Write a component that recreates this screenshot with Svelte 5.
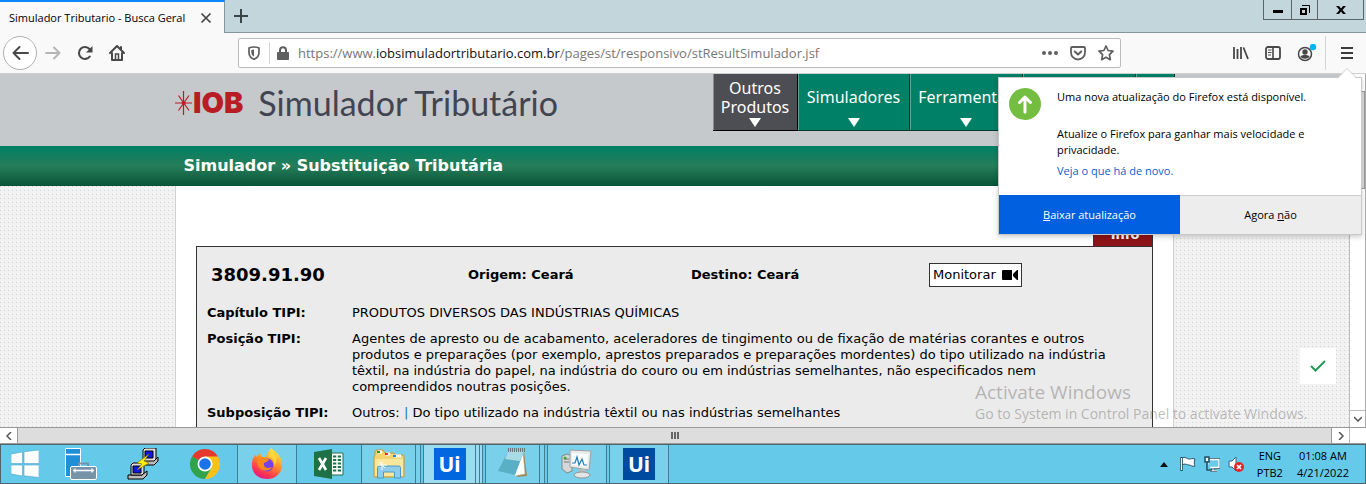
<script>
  const menus = [
    { label: 'Outros Produtos', dark: true },
    { label: 'Simuladores' },
    { label: 'Ferramentas' },
    { label: '' },
    { label: '' }
  ];
  const rows = [
    { term: 'Capítulo TIPI:', lines: ['PRODUTOS DIVERSOS DAS INDÚSTRIAS QUÍMICAS'] },
    {
      term: 'Posição TIPI:',
      lines: [
        'Agentes de apresto ou de acabamento, aceleradores de tingimento ou de fixação de matérias corantes e outros',
        'produtos e preparações (por exemplo, aprestos preparados e preparações mordentes) do tipo utilizado na indústria',
        'têxtil, na indústria do papel, na indústria do couro ou em indústrias semelhantes, não especificados nem',
        'compreendidos noutras posições.'
      ]
    },
    { term: 'Subposição TIPI:', split: ['Outros:', 'Do tipo utilizado na indústria têxtil ou nas indústrias semelhantes'] }
  ];
</script>

<div class="desktop">
  <div class="tabstrip">
    <div class="tab">
      <span>Simulador Tributario - Busca Geral</span>
      <button class="plain" aria-label="Fechar aba">
        <svg width="12" height="12" viewBox="0 0 12 12"><path d="M1.500 1.500l9 9M10.500 1.500l-9 9" stroke="#444" stroke-width="1.700" /></svg>
      </button>
    </div>
    <button class="plain newtab" aria-label="Nova aba">
      <svg width="14" height="14" viewBox="0 0 14 14"><path d="M7 0v14M0 7h14" stroke="#3b4446" stroke-width="2" /></svg>
    </button>
    <div class="wincontrols">
      <button class="min" aria-label="Minimizar"><svg width="10" height="10"><path d="M0 5h10v3H0z" fill="#000" /></svg></button>
      <button class="max" aria-label="Restaurar"><svg width="10" height="10"><path d="M1 4h5v5H1z" fill="none" stroke="#000" stroke-width="2" /><path d="M2 .5h7.500V8" fill="none" stroke="#000" /></svg></button>
      <button class="close" aria-label="Fechar"><svg width="10" height="10"><path d="M0 1h3l2 2.500L7 1h3L6.500 5 10 9H7L5 6.500 3 9H0l3.500-4z" fill="#000" /></svg></button>
    </div>
  </div>

  <div class="toolbar">
    <div class="navicons">
      <button class="plain back" aria-label="Voltar"><svg width="18" height="18" viewBox="0 0 18 18"><path d="M17 9H2.500M8.500 3l-6 6 6 6" fill="none" stroke="#484848" stroke-width="2" stroke-linecap="round" stroke-linejoin="round" /></svg></button>
      <button class="plain" aria-label="Avançar"><svg width="16" height="16" viewBox="0 0 16 16"><path d="M1 8h13.500M9 2.500 14.500 8 9 13.500" fill="none" stroke="#b5b5b5" stroke-width="2" stroke-linecap="round" stroke-linejoin="round" /></svg></button>
      <button class="plain" aria-label="Recarregar"><svg width="16" height="16" viewBox="0 0 16 16"><path d="M12.800 11.500A6 6 0 1 1 12.500 4" fill="none" stroke="#484848" stroke-width="2.100" stroke-linecap="round" /><path d="M15.500 1v6.500H9z" fill="#484848" /></svg></button>
      <button class="plain" aria-label="Página inicial"><svg width="16" height="16" viewBox="0 0 16 16"><path d="M1 8l7-7 7 7M3 8v7h10V8M12 2v3" fill="none" stroke="#484848" stroke-width="2" stroke-linecap="round" stroke-linejoin="round" /><path d="M6.500 15V9h3v6z" fill="none" stroke="#484848" stroke-width="1.500" /></svg></button>
    </div>
    <div class="urlbar">
      <svg width="14" height="14" viewBox="0 0 14 14"><path d="M7 1c2 0 4 .5 5 1v4.500c0 3.500-2 5.500-5 6.800C4 12 2 10 2 6.500V2c1-.5 3-1 5-1z" fill="none" stroke="#5f5f5f" stroke-width="1.700" /><path d="M7 3.500v7C5 9.500 4.300 8.500 4.300 6V4z" fill="#5f5f5f" /></svg>
      <span class="rule"></span>
      <svg class="lock" width="12" height="14" viewBox="0 0 12 14"><path d="M3 7V4.200a3 3 0 0 1 6 0V7" fill="none" stroke="#5f5f5f" stroke-width="2" /><rect y="6" width="12" height="8" rx="1" fill="#5f5f5f" /></svg>
      <span class="url">https://www.<b>iobsimuladortributario.com.br</b>/pages/st/responsivo/stResultSimulador.jsf</span>
      <svg width="16" height="16" viewBox="0 0 16 16"><g fill="#5f5f5f"><circle cx="2" cy="8" r="2" /><circle cx="8" cy="8" r="2" /><circle cx="14" cy="8" r="2" /></g></svg>
      <svg width="16" height="16" viewBox="0 0 16 16"><path d="M2 2h12c.6 0 1 .4 1 1v4.500a7 7 0 0 1-14 0V3c0-.6.4-1 1-1z" fill="none" stroke="#5f5f5f" stroke-width="1.800" /><path d="M4.800 6.500 8 9.500l3.200-3" fill="none" stroke="#5f5f5f" stroke-width="2" stroke-linecap="round" stroke-linejoin="round" /></svg>
      <svg width="16" height="16" viewBox="0 0 16 16"><path d="M8 1l2.100 4.500 4.900.7-3.600 3.500.9 5L8 12.300l-4.300 2.400.9-5L1 6.200l4.900-.7z" fill="none" stroke="#5f5f5f" stroke-width="1.700" stroke-linejoin="round" /></svg>
    </div>
    <div class="tools">
      <svg width="16" height="16" viewBox="0 0 16 16"><path d="M1 2v12M4.500 4v10M8 2v12M10.500 2.500l4.500 11.500" fill="none" stroke="#484848" stroke-width="1.800" /></svg>
      <svg width="16" height="16" viewBox="0 0 16 16"><rect x="1" y="2" width="14" height="12" rx="2" fill="none" stroke="#484848" stroke-width="1.800" /><path d="M8 2v12" stroke="#484848" stroke-width="1.600" /><path d="M3 5h3.500M3 7.500h3.500M3 10h3" stroke="#484848" /></svg>
      <svg class="account" width="20" height="18" viewBox="0 0 20 18"><circle cx="8" cy="10" r="6.500" fill="none" stroke="#484848" stroke-width="1.500" /><circle cx="8" cy="8" r="2.700" fill="#484848" /><path d="M3.500 12.500c1-2 8-2 9 0-1.500 3-7.500 3-9 0z" fill="#484848" /><circle cx="16" cy="3" r="3.200" fill="#00b3f4" /></svg>
      <span class="rule tall"></span>
      <button class="plain" aria-label="Menu"><svg width="12" height="14"><path d="M0 2h12M0 7h12M0 12h12" stroke="#3c3c3c" stroke-width="2" /></svg></button>
    </div>
  </div>

  <div class="viewport">
    <main class="page">
      <header class="masthead">
        <div class="inner">
          <div class="brand">
            <svg width="18" height="24" viewBox="0 0 18 24"><path d="M8.500 0v24M0 12h17M3.500 4.500l10.500 15M14 4.500l-10.500 15" stroke="#b81d26" stroke-width="1.200" /><circle cx="8.700" cy="12" r="2" fill="#b81d26" /></svg>
            <strong>IOB</strong>
            <h1>Simulador Tributário</h1>
          </div>
          <nav>
            {#each menus as menu}
              <button class:dark={menu.dark}><span>{menu.label}</span><svg width="12" height="9"><path d="M0 0h12L6 9z" fill="#fff" /></svg></button>
            {/each}
          </nav>
        </div>
      </header>
      <div class="crumbs"><h2>Simulador » Substituição Tributária</h2></div>
      <div class="dotted">
        <section class="sheet">
          <div class="info"><a href="#info">Info</a></div>
          <div class="card">
            <div class="cardhead">
              <h3>3809.91.90</h3>
              <b>Origem: Ceará</b>
              <b>Destino: Ceará</b>
              <button>Monitorar <svg width="16" height="10"><path d="M1 0h9v10H1a1 1 0 0 1-1-1V1a1 1 0 0 1 1-1zM11 4l4-4h1v10h-1l-4-4z" fill="#000" /></svg></button>
            </div>
            <table>
              <tbody>
                {#each rows as row}
                  <tr>
                    <th scope="row">{row.term}</th>
                    <td>
                      {#if row.split}{row.split[0]} <i>|</i> {row.split[1]}{:else}{#each row.lines as line}<div>{line}</div>{/each}{/if}
                    </td>
                  </tr>
                {/each}
              </tbody>
            </table>
          </div>
        </section>
      </div>
      <div class="tick"><svg width="16" height="12"><path d="M1 6l4.500 4.500L15 1" fill="none" stroke="#249a55" stroke-width="2" /></svg></div>
    </main>
    <div class="vscroll">
      <span class="arrow"></span>
      <span class="thumb"></span>
      <span class="arrow end"><svg width="8" height="6"><path d="M0 1l4 4 4-4" fill="none" stroke="#555" stroke-width="1.500" /></svg></span>
    </div>
  </div>
  <div class="hscroll">
    <span class="cap"><svg width="6" height="8"><path d="M5 0L1 4l4 4" fill="none" stroke="#555" stroke-width="1.500" /></svg></span>
    <span class="bar"><svg width="8" height="7"><path d="M1 0v7M4 0v7M7 0v7" stroke="#666" stroke-width="2" /></svg></span>
    <span class="cap"><svg width="6" height="8"><path d="M1 0l4 4-4 4" fill="none" stroke="#555" stroke-width="1.500" /></svg></span>
    <span class="corner"></span>
  </div>

  <footer class="taskbar">
    <button class="start" aria-label="Iniciar"><svg width="28" height="28" viewBox="0 0 28 28"><path d="M0 4l11.500-2v11.500H0zM13 1.800L28 0v13.500H13zM0 15h11.500v11L0 24zM13 15h15v12.500L13 25.800z" fill="#fff" stroke="#4ba5cc" stroke-width=".6" /></svg></button>
    <button class="app" aria-label="Server Manager"><svg width="32" height="32" viewBox="0 0 32 32"><path d="M.5.500h15v28H.5z" fill="#1e8fd8" stroke="#fff" /><path d="M1 6.500h14" stroke="#fff" stroke-width="1.500" /><path d="M14 18v-2.500h9V18" fill="none" stroke="#7793a8" stroke-width="2" /><rect x="5.500" y="18.500" width="26" height="13" rx="1.500" fill="#7793a8" stroke="#fff" /><path d="M8 22.500h21M10 20.500v4M27 20.500v4" stroke="#fff" stroke-width="1.400" /></svg></button>
    <button class="app" aria-label="PuTTY"><svg width="32" height="32" viewBox="0 0 32 32" stroke="#000"><path d="M15 12h13l3-3v4l-4 4H14v-3z" fill="#bbb" /><path d="M16 2l2-2h11v11l-2 2H16z" fill="#ddd" /><path d="M18 3h8v7h-8z" fill="#1018e8" /><path d="M1 27h14l5-4v4l-4 4H1z" fill="#bbb" /><path d="M4 17l2-2h11v10l-2 2H4z" fill="#ddd" /><path d="M6 18h8v7H6z" fill="#1018e8" /><path d="M22 6l-12 9 5 1-5 6 12-7-5-2z" fill="#ffef00" stroke="#777000" stroke-width=".6" /></svg></button>
    <button class="app" aria-label="Chrome"><svg width="32" height="32" viewBox="0 0 32 32"><path d="M16 16L3 8.500A15 15 0 0 1 29 8.500z" fill="#e5392d" /><path d="M3 8.500A15 15 0 0 0 16 31l6.500-11.200L16 16z" fill="#31a24c" /><path d="M29 8.500A15 15 0 0 1 16 31l6.500-11L16 8.500z" fill="#fbc116" /><circle cx="16" cy="16" r="7.500" fill="#fff" /><circle cx="16" cy="16" r="5.800" fill="#1a73e8" /></svg></button>
    <button class="app open" aria-label="Firefox"><svg width="32" height="32" viewBox="0 0 32 32"><defs><linearGradient id="fx" x1=".8" y1="0" x2=".3" y2="1"><stop offset="0" stop-color="#fff04a" /><stop offset=".45" stop-color="#ff9326" /><stop offset=".8" stop-color="#ff3750" /><stop offset="1" stop-color="#e31587" /></linearGradient></defs><path d="M20 0c4 3 9 7 10.500 12.500C33 23 26 31 16 31S0 24 1 15c.3-4 2-7 4-8.500L5.500 9 9 5l2 4h4c1-4 3-6 5-9z" fill="url(#fx)" /><circle cx="16" cy="17" r="6.500" fill="#7542e5" /><path d="M7 10c4-2 6 1 10 1 2 1-1 3-4 4-1 5 4 6 8 4-2 5-12 5-14-2-.8-3-.6-5 0-7z" fill="#ff8a1a" /><path d="M18 9c4 0 6 4 5 9 4-5 3-12-2-15-2 2-3 4-3 6z" fill="#ffd93b" /></svg></button>
    <button class="app" aria-label="Excel"><svg width="32" height="32" viewBox="0 0 32 32"><path d="M17 5h13v22H17z" fill="#fff" stroke="#1e7145" /><path d="M20 8.500h8M20 12h8M20 15.500h8M20 19h8M20 22.500h8" stroke="#1e7145" stroke-width="2" /><path d="M24 6v20" stroke="#fff" stroke-width="1.500" /><path d="M1 4l18-3v30L1 28z" fill="#1e7145" /><path d="M6 10l7 12M13 10L6 22" stroke="#fff" stroke-width="2.600" /></svg></button>
    <button class="app open stack" aria-label="Explorador"><span><svg width="32" height="30" viewBox="0 0 32 30"><path d="M2 6V3q0-2 2-2h6l2 3h8q2 0 2 2h8q1 0 1 2v20H1V8z" fill="#f3d46f" stroke="#c79a35" /><path d="M5 3h4M13 5h4M21 7h7" stroke="#fff" stroke-width="3" /><path d="M4 3h3" stroke="#1ba12d" stroke-width="2" /><path d="M12 5h3" stroke="#d33" stroke-width="2" /><path d="M20 7h3" stroke="#2389da" stroke-width="2" /><path d="M2 10h28v17H2z" fill="#fbe79b" /><path d="M4.500 29V18.500q0-1.500 2-1.500h19q2 0 2 1.500V29h-6v-6h-11v6z" fill="#8fcdea" stroke="#4c9ac4" /><path d="M9 12v9M5 16h9M6 13l6 6" stroke="#fff" /></svg></span></button>
    <button class="app open stack triple active" aria-label="UiPath"><span><em class="ui">Ui</em></span></button>
    <button class="app open stack" aria-label="Bloco de notas"><span><svg width="32" height="32" viewBox="0 0 32 32"><path d="M27 4l3 24-10 1z" fill="#a58750" /><path d="M26 4l2 22-11 2z" fill="#fff" stroke="#aaa" stroke-width=".5" /><path d="M11 3h16l-9 24-17-4z" fill="#59afc5" /><path d="M11 3h16l-4 10-15-2z" fill="#a9dbe5" /><path d="M11 2h17" stroke="#67777e" stroke-width="4" stroke-dasharray="1 1" /></svg></span></button>
    <button class="app open" aria-label="Monitor"><svg width="32" height="30" viewBox="0 0 32 30"><path d="M1 7l5-2 5 2v15l-5 2-5-4z" fill="#d6d8d8" stroke="#808789" /><path d="M3 10h5M3 13h5" stroke="#777" /><circle cx="4" cy="9" r="1.500" fill="#3da830" /><path d="M9 1l21 1-2 19-19-3z" fill="#e9eaea" stroke="#9ca2a4" /><path d="M11 4l16 1-1 13-15-2z" fill="#f6fcff" /><path d="M11 14h3l2-6 2 8 3-6 2 6h3" fill="none" stroke="#227db5" stroke-width="1.200" /><path d="M18 20h6l1 4h-8z" fill="#b7bbbc" /><ellipse cx="21" cy="26" rx="8" ry="3" fill="#e3e5e5" stroke="#92989a" /></svg></button>
    <button class="app open" aria-label="UiPath Studio"><em class="ui navy">Ui</em></button>
    <div class="tray">
      <svg width="8" height="5"><path d="M0 5l4-5 4 5z" fill="#111" /></svg>
      <svg width="16" height="16" viewBox="0 0 16 16"><path d="M2 2c3-2 5 1 7 1s3-1 6 0c-1 3-1 5 0 7-3 1-4-1-6-1s-4-2-7 0z" fill="#fff" stroke="#285365" /><path d="M1.500 1v14" stroke="#285365" stroke-width="2.500" /><path d="M1.500 2v12" stroke="#fff" /></svg>
      <svg width="16" height="16" viewBox="0 0 16 16"><path d="M4 3.500h11v8H4z" fill="#6ccbe9" stroke="#285365" stroke-width="3" /><path d="M4 3.500h11v8H4z" fill="#6ccbe9" stroke="#fff" stroke-width="1.300" /><path d="M9 12v3M6 15h7" stroke="#285365" stroke-width="2.500" /><path d="M9 12v3M6 14.800h7" stroke="#fff" /><path d="M1 1h4v5H1zM3 6v8h5" fill="#6ccbe9" stroke="#285365" stroke-width="1.500" /><path d="M2 2h2v3H2z" fill="#fff" /></svg>
      <svg width="16" height="16" viewBox="0 0 16 16"><path d="M1 5h3l4-4v14l-4-4H1z" fill="#fff" stroke="#31687e" /><circle cx="11" cy="11" r="5" fill="#df2727" /><path d="M9 9l4 4M13 9l-4 4" stroke="#fff" stroke-width="1.700" /></svg>
      <div class="lang"><span>ENG</span><span>PTB2</span></div>
      <div class="clock"><span>01:08 AM</span><span>4/21/2022</span></div>
    </div>
  </footer>

  <aside class="watermark"><p>Activate Windows</p><span>Go to System in Control Panel to activate Windows.</span></aside>

  <aside class="popup">
    <svg class="pointer" width="20" height="11"><path d="M0 11L10 1l10 10z" fill="#fff" /><path d="M0 10.500L10 .5l10 10" fill="none" stroke="#cfcfcf" /></svg>
    <div class="message">
      <svg width="32" height="32"><circle cx="16" cy="16" r="16" fill="#73be40" /><path d="M16 24V10M10.500 14.500L16 9l5.500 5.500" fill="none" stroke="#fff" stroke-width="3" stroke-linecap="round" stroke-linejoin="round" /></svg>
      <div>
        <p class="lead">Uma nova atualização do Firefox está disponível.</p>
        <p>Atualize o Firefox para ganhar mais velocidade e<br />privacidade.</p>
        <a href="#novo">Veja o que há de novo.</a>
      </div>
    </div>
    <div class="actions"><button class="primary"><u>B</u>aixar atualização</button><button>Agora <u>n</u>ão</button></div>
  </aside>
</div>

<style>
  :global(body) { margin: 0; }
  * { box-sizing: border-box; }
  h1, h2, h3, p { margin: 0; }
  button { font: inherit; color: inherit; border: 0; padding: 0; background: none; }
  svg { display: block; flex: none; }
  a { text-decoration: none; }

  .desktop { position: relative; display: flex; flex-direction: column; height: 100vh; overflow: hidden; font: 11px/16px "Open Sans", sans-serif; color: #000; }
  .plain { display: flex; align-items: center; justify-content: center; }

  .tabstrip { flex: none; display: flex; height: 33px; background: #c3d6dc; }
  .tab { display: flex; align-items: center; justify-content: space-between; width: 225px; padding: 0 12px 0 9px; background: #f9f9fa; border-top: 2px solid #0a84ff; border-right: 1px solid #83969c; white-space: nowrap; }
  .newtab { width: 32px; }
  .newtab, .wincontrols { border-bottom: 1px solid #83969c; }
  .wincontrols { flex: 1; display: flex; justify-content: flex-end; padding-right: 2px; }
  .wincontrols button { display: flex; align-items: center; justify-content: center; height: 20px; border: 1px solid #5b6569; border-width: 0 1px 1px 0; }
  .wincontrols .min { width: 29px; border-left-width: 1px; }
  .wincontrols .max { width: 26px; }
  .wincontrols .close { width: 46px; }

  .toolbar { flex: none; display: flex; align-items: center; height: 41px; padding: 0 13px 0 3px; background: #f9f9fa; border-bottom: 1px solid #cfcfd0; }
  .navicons { display: flex; align-items: center; gap: 16px; width: 235px; flex: none; }
  .navicons .back { width: 34px; height: 34px; border: 1px solid #b1b1b1; border-radius: 50%; background: #fff; margin-right: -8px; }
  .urlbar { flex: 1; display: flex; align-items: center; gap: 12px; height: 30px; padding: 0 6px 0 8px; background: #fff; border: 1px solid #bcbcbc; border-radius: 2px; margin-right: 112px; }
  .rule { width: 1px; height: 22px; background: #d4d4d4; margin: 0 -4px; }
  .rule.tall { height: 34px; margin: 0 -1px 0 0; }
  .url { flex: 1; color: #777; font: 13px/18px "Open Sans", sans-serif; white-space: nowrap; overflow: hidden; }
  .url b { font-weight: 400; color: #111; }
  .lock { margin: 0 -3px 0 -1px; }
  .tools { display: flex; align-items: center; gap: 16px; }
  .account { margin-right: -8px; }

  .viewport { flex: 1; min-height: 0; display: flex; }
  .page { position: relative; flex: 1; min-width: 0; display: flex; flex-direction: column; overflow: hidden; }
  .masthead { flex: none; height: 72px; background: #c5c9cb; }
  .inner { display: flex; justify-content: space-between; width: 74%; min-width: 1000px; margin: 0 auto; }
  .brand { display: flex; align-items: center; height: 58px; color: #424551; }
  .brand strong { font: 900 29px/32px Inter, sans-serif; color: #b81d26; }
  .brand h1 { font: 400 34px/40px Lato, sans-serif; margin-left: 15px; white-space: nowrap; }
  nav { display: flex; width: 462px; flex: none; }
  nav button { display: flex; flex-direction: column; align-items: center; justify-content: space-between; flex: 0 0 113px; height: 57px; padding: 5px 6px 3px; overflow: hidden; color: #fff; font: 16px/19px "Noto Sans", sans-serif; background: #008066; border: 1px solid #00352c; border-width: 0 1px 1px 0; box-shadow: inset 1px 0 #56a894; }
  nav button:nth-child(2) { flex-basis: 112px; }
  nav button.dark { flex-basis: 85px; background: #4d4e53; border-color: #000; box-shadow: inset 1px 0 #8b8c8f; }
  nav button:last-child { flex-basis: 39px; }
  nav button:not(.dark) span { padding-top: 9px; }
  .crumbs { flex: none; height: 40px; background: linear-gradient(#008064, #267d59 50%, #075337); }
  .crumbs h2 { width: 74%; min-width: 998px; margin: 0 auto; padding-left: 8px; color: #fff; font: bold 16px/40px "DejaVu Sans", sans-serif; }
  .dotted { flex: 1; min-height: 0; background: conic-gradient(at 1px 1px, transparent 75%, #d3d3d3 0) 0 0 / 4px 4px #f2f2f2; border-right: 1px solid #bbb; }
  .sheet { display: flex; flex-direction: column; width: 74%; min-width: 999px; height: 100%; margin: 0 auto; padding: 34px 20px 0; background: #fff; border: 1px solid #d0d0d0; border-width: 0 1px; }
  .info { display: flex; justify-content: flex-end; }
  .info a { width: 60px; height: 26px; padding-left: 4px; color: #fff; background: #8d1418; border: 1px solid #333; border-bottom: 0; text-align: center; font: bold 13px/27px "DejaVu Sans", sans-serif; }
  .card { flex: 1; background: #ebebeb; border: 1px solid #333; border-bottom: 0; padding: 0 10px; font: 13px/16px "DejaVu Sans", sans-serif; }
  .cardhead { display: grid; grid-template-columns: 257px 223px 238px auto; align-items: center; justify-content: start; height: 53px; padding: 2px 0 0 4px; white-space: nowrap; }
  .cardhead h3 { font-size: 18px; line-height: 20px; }
  .cardhead button { display: flex; align-items: center; gap: 6px; height: 24px; padding: 0 3px; background: #fff; border: 1px solid #333; }
  table { border-collapse: collapse; }
  th, td { padding: 5px 0; vertical-align: top; text-align: left; white-space: nowrap; }
  th { width: 145px; }
  td i { font-style: normal; color: #1c72b8; }
  .tick { position: absolute; right: 14px; bottom: 43px; display: flex; align-items: center; justify-content: center; width: 36px; height: 36px; background: #fff; }

  .vscroll { flex: none; display: flex; flex-direction: column; width: 16px; background: #fff; border-right: 1px solid #aaa; }
  .arrow { height: 17px; background: #fff; }
  .thumb { height: 98px; background: #ddd; border: 1px solid #999; }
  .end { display: flex; align-items: center; justify-content: center; margin-top: auto; border-top: 1px solid #bbb; }
  .hscroll { flex: none; display: flex; height: 17px; background: #fff; border: 1px solid #999; border-width: 1px 0; }
  .cap { display: flex; align-items: center; justify-content: center; width: 17px; }
  .bar { flex: 1; display: flex; align-items: center; justify-content: center; background: #ddd; border: 1px solid #999; border-width: 0 1px; }
  .corner { width: 17px; border-left: 1px solid #bbb; }

  .taskbar { flex: none; display: flex; gap: 2px; height: 40px; background: #65c9e9; border: 1px solid #50646c; }
  .start { width: 48px; display: flex; align-items: center; justify-content: center; }
  .app { width: 60px; display: flex; align-items: center; justify-content: center; }
  .open { background: #79d0eb; border: 1px solid #3f7f95; border-width: 0 1px; }
  .stack { justify-content: flex-start; }
  .stack span { display: flex; align-items: center; justify-content: center; width: 54px; height: 100%; border-right: 1px solid #3f7f95; }
  .active { background: #9cdcf1; }
  .triple span { width: 52px; box-shadow: 3px 0 #9cdcf1, 4px 0 #3f7f95; }
  .ui { width: 32px; height: 32px; background: #0067df; color: #fff; font: bold 21px/32px "Noto Sans", sans-serif; text-align: center; }
  .navy { background: #004a9f; }
  .tray { margin-left: auto; display: flex; align-items: center; gap: 8px; padding-right: 16px; }
  .tray > svg:first-child { margin-right: 4px; }
  .lang, .clock { display: flex; flex-direction: column; align-items: center; line-height: 17px; }
  .lang { margin-left: 5px; }
  .clock { margin-left: 6px; }

  .watermark { position: absolute; right: 51px; bottom: 60px; width: 340px; color: rgba(125, 125, 125, .5); font: 14px/20px "Open Sans", sans-serif; white-space: nowrap; }
  .watermark p { font-size: 19px; line-height: 24px; }

  .popup { position: absolute; top: 77px; right: 4px; width: 364px; background: #fff; border: 1px solid #c9c9c9; box-shadow: 0 2px 5px rgba(0, 0, 0, .2); }
  .pointer { position: absolute; top: -10px; right: 4px; }
  .message { display: flex; gap: 16px; height: 117px; padding: 10px 10px 0; }
  .message .lead { margin: 1px 0 21px; }
  .message a { display: block; margin-top: 5px; color: #0a62cc; }
  .actions { display: flex; height: 39px; }
  .actions button { flex: 1; background: #ededed; border-top: 1px solid #ccc; }
  .actions .primary { background: #0060df; color: #fff; border-color: #0060df; }
</style>
